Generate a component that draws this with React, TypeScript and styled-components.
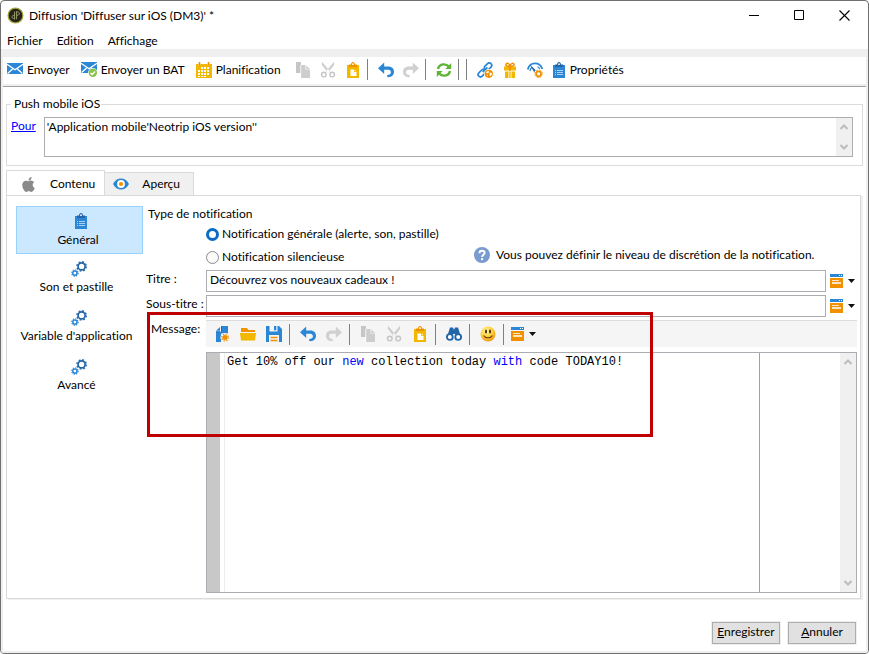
import React from "react";
import styled, { createGlobalStyle } from "styled-components";
import { FaApple } from "react-icons/fa";

const BLUE = "#2b87d6";
const NAVY = "#2366a8";
const ORANGE = "#f29100";
const YELLOW = "#f2b800";
const GREY = "#cdcdcd";

const GlobalStyle = createGlobalStyle`
  *, *::before, *::after { box-sizing: border-box; }
  body { margin: 0; background: #fff; }
  body, button, input, textarea {
    font-family: Lato, "Open Sans", sans-serif;
    font-size: 12px;
    line-height: 16px;
    color: #000;
    font-variant-ligatures: none;
  }
  button, input, textarea { margin: 0; }
  svg { display: block; flex: none; }
`;

/* ---------- window frame ---------- */

const Window = styled.div`
  min-height: 100vh;
  display: flex;
  flex-direction: column;
  border: 1px solid #707070;
  border-radius: 4px;
  background: #fff;
`;

const TitleBar = styled.header`
  display: flex;
  align-items: center;
  height: 30px;
  padding: 0 1px 1px 6px;
`;

const Title = styled.h1`
  flex: 1;
  margin: 0 0 0 5px;
  font-size: 12px;
  font-weight: 400;
`;

const CaptionButton = styled.button`
  width: 45px;
  height: 29px;
  display: grid;
  place-items: center;
  padding: 0;
  border: 0;
  background: none;
`;

const MenuBar = styled.nav`
  display: flex;
  gap: 14px;
  height: 18px;
  padding: 2px 6px 0;
`;

const MenuItem = styled.button`
  padding: 0;
  border: 0;
  background: none;
`;

const Frame = styled.div`
  flex: 1;
  display: flex;
  flex-direction: column;
  padding: 8px 2px 2px;
  background: #efefef;
  border-radius: 0 0 3px 3px;
`;

const Body = styled.main`
  flex: 1;
  display: flex;
  flex-direction: column;
  margin-top: 2px;
  padding: 10px 3px 0;
  border-top: 1px solid #a0a0a0;
  background: #fff;
`;

/* ---------- toolbars ---------- */

const MainToolbar = styled.div`
  display: flex;
  align-items: center;
  height: 27px;
  padding: 0 0 2px 4px;
  background: #fff;
`;

const TextTool = styled.button`
  display: flex;
  align-items: center;
  gap: 4px;
  padding: 0;
  border: 0;
  background: none;
  white-space: nowrap;
`;

const PropertiesTool = styled(TextTool)`
  margin-left: 4px;
`;

const SendTools = styled.div`
  display: flex;
  gap: 11px;
  margin-right: 10px;
`;

const IconTool = styled.button<{ $wide?: boolean }>`
  width: ${(p) => (p.$wide ? 26 : 25)}px;
  height: 25px;
  display: grid;
  place-items: center;
  padding: 0;
  border: 0;
  background: none;
`;

const Separator = styled.span<{ $before: number; $after: number }>`
  width: 1px;
  height: 21px;
  margin: 0 ${(p) => p.$after}px 0 ${(p) => p.$before}px;
  background: #808080;
`;

const EditorToolbar = styled.div`
  display: flex;
  align-items: center;
  height: 27px;
  padding-left: 3px;
  border-top: 1px solid #dcdcdc;
  background: #f5f5f5;
`;

const FieldTool = styled.button`
  display: flex;
  align-items: center;
  gap: 5px;
  padding: 0 2px;
  border: 0;
  background: none;
`;

/* ---------- recipients ---------- */

const Recipients = styled.fieldset`
  display: flex;
  align-items: flex-start;
  gap: 8px;
  min-width: 0;
  margin: 0;
  padding: 6px 9px 8px 4px;
  border: 1px solid #dcdcdc;
`;

const Legend = styled.legend`
  padding: 0 1px 0 3px;
  line-height: 14px;
`;

const Link = styled.a`
  padding-top: 1px;
  color: #0000ff;
  text-decoration: underline;
`;

const ScrollBox = styled.div`
  flex: 1;
  display: flex;
  height: 40px;
  border: 1px solid #abadb3;
`;

const RecipientText = styled.textarea`
  flex: 1;
  min-width: 0;
  padding: 1px 2px;
  border: 0;
  outline: 0;
  resize: none;
  overflow: hidden;
`;

const ScrollTrack = styled.div`
  width: 16px;
  display: flex;
  flex-direction: column;
  justify-content: space-between;
  background: #f0f0f0;
`;

const ScrollButton = styled.button`
  height: 18px;
  display: grid;
  place-items: center;
  padding: 0;
  border: 0;
  background: none;
`;

/* ---------- tabs ---------- */

const TabList = styled.div`
  display: flex;
  align-items: flex-end;
  margin-top: 4px;
`;

const Tab = styled.button<{ $active?: boolean }>`
  display: flex;
  align-items: center;
  height: ${(p) => (p.$active ? 26 : 24)}px;
  margin-bottom: -1px;
  padding: ${(p) => (p.$active ? "2px 9px 0 13px" : "0 13px 0 8px")};
  gap: 13px;
  border: 1px solid #dadada;
  border-left-width: ${(p) => (p.$active ? 1 : 0)}px;
  border-bottom-color: ${(p) => (p.$active ? "#fff" : "#dadada")};
  background: ${(p) => (p.$active ? "#fff" : "#f0f0f0")};
`;

const Panel = styled.section`
  flex: 1;
  display: flex;
  gap: 3px;
  margin-right: 2px;
  padding: 10px 3px 5px 9px;
  border: 1px solid #dadada;
  box-shadow: 2px 1px 0 #efefef;
`;

const SideNav = styled.nav`
  width: 127px;
  flex: none;
  display: flex;
  flex-direction: column;
  gap: 1px;
`;

const SideItem = styled.button<{ $active?: boolean }>`
  height: 48px;
  display: flex;
  flex-direction: column;
  align-items: center;
  padding: ${(p) => (p.$active ? "6px 3px 0 0" : "5px 6px 0 0")};
  border: 1px solid ${(p) => (p.$active ? "#99d1ff" : "transparent")};
  background: ${(p) => (p.$active ? "#cce8ff" : "none")};
  white-space: nowrap;

  svg { margin: 0 0 ${(p) => (p.$active ? 3 : 2)}px 5px; }
`;

/* ---------- form ---------- */

const Form = styled.form`
  flex: 1;
  min-width: 0;
  display: flex;
  flex-direction: column;
  gap: 3px;
`;

const KindGroup = styled.fieldset`
  min-width: 0;
  margin: 0;
  padding: 0 0 2px;
  border: 0;
`;

const KindLegend = styled.legend`
  padding: 0 2px;
`;

const KindRow = styled.div<{ $gap: number }>`
  display: flex;
  align-items: center;
  height: 16px;
  margin-top: ${(p) => p.$gap}px;
  padding-left: 60px;
`;

const RadioLabel = styled.label`
  width: 268px;
  display: flex;
  align-items: center;
  gap: 3px;
  white-space: nowrap;
`;

const Radio = styled.input`
  appearance: none;
  width: 13px;
  height: 13px;
  flex: none;
  border: 1px solid #8a8a8a;
  border-radius: 50%;
  background: #fafafa;

  &:checked {
    border: 3px solid #0a6cc4;
    background: #fff;
  }
`;

const Hint = styled.p`
  display: flex;
  align-items: center;
  gap: 6px;
  margin: 0 0 4px;
  white-space: nowrap;
`;

const Field = styled.div`
  display: flex;
  align-items: center;
`;

const FieldLabel = styled.label`
  width: 60px;
  flex: none;
  padding-bottom: 4px;
  white-space: nowrap;
`;

const TextInput = styled.input`
  flex: 1;
  min-width: 0;
  height: 22px;
  margin-right: 2px;
  padding: 0 3px 3px;
  border: 1px solid #abadb3;
  outline: 0;
  background: #fff;
`;

const MessageSection = styled.div`
  position: relative;
  flex: 1;
  display: flex;
`;

const MessageLabel = styled.span`
  width: 60px;
  flex: none;
  padding: 1px 0 0 5px;
`;

const MessageColumn = styled.div`
  flex: 1;
  min-width: 0;
  display: flex;
  flex-direction: column;
  gap: 5px;
`;

const Editor = styled.div`
  flex: 1;
  min-height: 200px;
  display: flex;
  border: 1px solid #abadb3;
`;

const Gutter = styled.div`
  width: 13px;
  margin-right: 4px;
  background: #c8c8c8;
`;

const EditorText = styled.div`
  flex: 1;
  min-width: 0;
  margin-right: 80px;
  padding: 1px 2px;
  border-left: 1px solid #ececec;
  border-right: 1px solid #a0a0a0;
  outline: 0;
  font-family: "Liberation Mono", "Courier New", monospace;
  white-space: pre-wrap;
`;

const Keyword = styled.span`
  color: #0000ff;
`;

const Highlight = styled.div`
  position: absolute;
  top: -8px;
  left: 1px;
  width: 506px;
  height: 125px;
  border: 3px solid #c00000;
  pointer-events: none;
`;

/* ---------- footer ---------- */

const Footer = styled.footer`
  display: flex;
  justify-content: flex-end;
  gap: 8px;
  padding: 23px 7px 7px;
`;

const PushButton = styled.button`
  width: 68px;
  height: 22px;
  padding: 0 0 2px;
  border: 1px solid #adadad;
  box-shadow: 0 0 0 1px #efefef;
  background: #e1e1e1;

  &::first-letter { text-decoration: underline; }
`;

/* ---------- icons ---------- */

const Svg = ({ w = 16, h = 16, children }: { w?: number; h?: number; children: React.ReactNode }) => (
  <svg width={w} height={h} viewBox={`0 0 ${w} ${h}`} fill="none" aria-hidden="true">
    {children}
  </svg>
);

const AppIcon = () => (
  <Svg w={17} h={17}>
    <circle cx="8.5" cy="8.5" r="7.4" fill="#23231c" stroke="#a3a339" strokeWidth="1.2" />
    <path d="M7.6 4.6v8M7.6 8.4c-1.6-.6-2.6.4-2.600 1.600s1.200 1.800 2.600 1.200M9.600 4.200v8M9.600 5c1.600-.6 2.700.2 2.700 1.500s-1.100 2.100-2.700 1.500" stroke="#9c9d6c" strokeWidth="1" />
  </Svg>
);

const MailShape = () => (
  <>
    <path fill={BLUE} d="M0 0h16v11H0z" />
    <path stroke="#fff" strokeWidth="1.3" d="M0 1.2l8 5.6 8-5.6M.6 10.4L5.6 6M15.4 10.4l-5-4.4" />
  </>
);

const MailIcon = () => (
  <Svg h={14}>
    <MailShape />
  </Svg>
);

const MailCheckIcon = () => (
  <Svg>
    <MailShape />
    <circle cx="11.8" cy="10.8" r="4.8" fill="#fff" />
    <circle cx="11.8" cy="10.8" r="4.2" fill="#8bc34a" />
    <path stroke="#fff" strokeWidth="1.4" d="M9.6 10.9l1.6 1.6 2.9-3.1" />
  </Svg>
);

const CalendarIcon = () => (
  <Svg>
    <path fill={YELLOW} d="M0 2h16v14H0z" />
    <path stroke="#fff" strokeWidth="2" d="M3.5 0v3M12.5 0v3" />
    <path stroke={ORANGE} strokeWidth="1.6" d="M3.5 0v3.6M12.5 0v3.6" />
    <path
      fill="#fff"
      d="M5 5h2v2H5zM8 5h2v2H8zM11 5h2v2h-2zM2 8h2v2H2zM5 8h2v2H5zM8 8h2v2H8zM11 8h2v2h-2zM2 11h2v2H2zM5 11h2v2H5zM8 11h2v2H8zM11 11h2v2h-2z"
    />
    <path fill="#fff" d="M2 14h2v1H2zM5 14h2v1H5zM8 14h2v1H8z" />
  </Svg>
);

const CopyIcon = () => (
  <Svg>
    <path fill="#c6c6c6" d="M1 0h5v11H1z" />
    <path fill={GREY} d="M6 3h4.5v4.5H15V16H6z" />
    <path fill={GREY} d="M11.3 3.4L15 7h-3.7z" />
    <path stroke="#fff" strokeWidth=".8" d="M5.7 2.8V16" />
  </Svg>
);

const CutIcon = () => (
  <Svg>
    <path fill={GREY} d="M2.2 0L9.9 9.2l-2 1.6L1.7 2.6zM13.8 0L6.1 9.2l2 1.6 6.2-8.2z" />
    <circle cx="3.8" cy="12.6" r="2.3" stroke="#c4c4c4" strokeWidth="1.4" />
    <circle cx="12.2" cy="12.6" r="2.3" stroke="#c4c4c4" strokeWidth="1.4" />
  </Svg>
);

const PasteIcon = () => (
  <Svg>
    <path fill={YELLOW} d="M2 3h12v13H2z" />
    <path fill={ORANGE} d="M4 2.4h2C6 .9 6.9 0 8 0s2 .9 2 2.4h2V5H4z" />
    <circle cx="8" cy="2.2" r=".9" fill="#fff" />
    <path fill="#fff" d="M5.5 7.5H9V10h2.5v4h-6z" />
    <path fill="#fff" d="M9.7 7.5l1.8 1.8H9.7z" />
  </Svg>
);

const ArrowShape = () => (
  <>
    <path d="M0 6.2L6.2.5v11.4z" />
    <path d="M5.5 4.6h5C14 4.6 16 7 16 9.800c0 3.200-2.300 5.400-5.500 5.400-1 0-1.500-.5-1.500-1.200s.6-1.200 1.500-1.300c1.500-.1 2.400-1.200 2.400-2.500 0-1.400-1-2.400-2.600-2.400H5.500z" />
  </>
);

const UndoIcon = () => (
  <Svg>
    <g fill={BLUE}>
      <ArrowShape />
    </g>
  </Svg>
);

const RedoIcon = () => (
  <Svg>
    <g fill="#d0d0d0" transform="translate(16 0) scale(-1 1)">
      <ArrowShape />
    </g>
  </Svg>
);

const RefreshIcon = () => (
  <Svg>
    <g fill="none" stroke="#5fb336" strokeWidth="2.4">
      <path d="M2 7C2.600 4.200 5 2.400 8 2.400c2 0 3.600.8 4.700 2.200" />
      <path d="M14 9c-.6 2.800-3 4.600-6 4.600-2 0-3.600-.8-4.700-2.200" />
    </g>
    <path fill="#5fb336" d="M15.2 1v6H9.400zM.8 15V9h5.800z" />
  </Svg>
);

const LinkGlobeIcon = () => (
  <Svg>
    <g stroke={BLUE} strokeWidth="1.7" fill="none">
      <rect x="6.8" y="2.2" width="8.4" height="4.8" rx="2.4" transform="rotate(-45 11 4.6)" />
      <rect x=".6" y="8.8" width="8.4" height="4.8" rx="2.4" transform="rotate(-45 4.8 11.2)" />
      <path d="M5.6 10.2l4.8-4.8" />
    </g>
    <circle cx="11.8" cy="11.8" r="4.7" fill="#fff" />
    <circle cx="11.8" cy="11.8" r="4.1" fill={ORANGE} />
    <path fill="#fff" d="M9.2 10l2-1.300.9 1.200-1.200 1.300-1.400-.1zM12.700 10.600l2 .3.200 1.700-1.600 1.600-.7-1.500zM9.600 12.600l1.400.6-.3 1.300z" />
  </Svg>
);

const GiftIcon = () => (
  <Svg>
    <path fill={YELLOW} d="M2 4.5h12v4H2zM3 9.5h10V16H3z" />
    <path fill={ORANGE} d="M7 4.5h2v4H7z" />
    <path fill="#fff" d="M6.5 9.5h.8V16h-.8zM8.7 9.5h.8V16h-.8z" />
    <path stroke={ORANGE} strokeWidth="1.5" d="M8 4.300C5 4.600 3.600 3.600 4 2.200 4.600.6 7.400.8 8 4.300c.6-3.500 3.400-3.700 4-2.100.4 1.400-1 2.400-4 2.100z" />
  </Svg>
);

const GaugeIcon = () => (
  <Svg>
    <g stroke={BLUE}>
      <path strokeWidth="1.8" d="M.7 7.500C1.800 3.800 4.600 1.400 8 1.400s6.200 2.200 7.300 5.600" />
      <path strokeWidth="1.2" d="M2.800 9c.4-1.800 1.300-3.200 2.600-4M10.500 4.800c1 .5 1.800 1.200 2.300 2.200" />
    </g>
    <path fill={NAVY} d="M2.600 2.600l6.800 6.200-1.900 2z" />
    <circle cx="11.6" cy="11.8" r="4.5" fill="#fff" />
    <circle cx="11.6" cy="11.8" r="3.7" stroke={ORANGE} strokeWidth="1" strokeDasharray="1.6 1.3" />
    <circle cx="11.6" cy="11.8" r="2.5" stroke={ORANGE} strokeWidth="1.7" />
  </Svg>
);

const ClipboardIcon = () => (
  <Svg w={14}>
    <path fill={BLUE} d="M1 3h12v13H1z" />
    <path fill={NAVY} d="M3 2.4h2C5 .9 5.9 0 7 0s2 .9 2 2.4h2V5H3z" />
    <circle cx="7" cy="2.2" r=".9" fill="#fff" />
    <path stroke="#a9d0f2" d="M5 8.5h6M5 10.5h6M5 12.5h6M3 8.5h1M3 10.5h1M3 12.5h1" />
  </Svg>
);

const EyeIcon = () => (
  <Svg h={12}>
    <path fill={BLUE} d="M0 6C2 2.2 4.8.5 8 .5S14 2.200 16 6c-2 3.800-4.800 5.500-8 5.500S2 9.800 0 6z" />
    <circle cx="8" cy="6" r="3.9" fill="#fff" />
    <circle cx="8" cy="6" r="2.1" fill={ORANGE} />
  </Svg>
);

const GearsIcon = () => (
  <Svg>
    <g stroke={NAVY}>
      <circle cx="10.6" cy="5.4" r="3.5" strokeWidth="1.7" />
      <circle cx="10.6" cy="5.4" r="4.7" strokeWidth="1.4" strokeDasharray="1.85 1.85" />
    </g>
    <g stroke={BLUE}>
      <circle cx="3.9" cy="12.1" r="2.1" strokeWidth="1.5" />
      <circle cx="3.9" cy="12.1" r="3.2" strokeWidth="1.2" strokeDasharray="1.25 1.25" />
    </g>
  </Svg>
);

const HelpIcon = () => (
  <Svg>
    <circle cx="8" cy="8" r="8" fill="#7a9bd0" />
    <path stroke="#fff" strokeWidth="1.9" d="M5.400 6.200c0-1.600 1.100-2.500 2.600-2.500s2.600.9 2.600 2.200c0 1.800-2.500 1.800-2.500 4" />
    <circle cx="8.1" cy="12.1" r="1.2" fill="#fff" />
  </Svg>
);

const FormIcon = () => (
  <Svg w={13} h={14}>
    <path fill={BLUE} d="M0 0h13v3H0z" />
    <path fill={ORANGE} d="M0 4h13v10H0z" />
    <path fill="#fff" d="M9 1h1v1H9zM11 1h1v1h-1z" />
    <path fill="#fde6c4" d="M2 6h7v1H2zM2 8h9v2H2z" />
  </Svg>
);

const CaretIcon = () => (
  <Svg w={7} h={4}>
    <path fill="#111" d="M0 0h7L3.5 4z" />
  </Svg>
);

const NewIcon = () => (
  <Svg>
    <path fill={BLUE} d="M7 0h7v7.5H7V16H2V6h5z" />
    <path fill={BLUE} d="M2 4.800L6 1v3.800z" />
    <path stroke={NAVY} d="M2 5.800h4.500M7.500 0v5" />
    <circle cx="11" cy="11.6" r="4.6" fill="#f5f5f5" />
    <circle cx="11" cy="11.6" r="2.5" fill={ORANGE} />
    <circle cx="11" cy="11.6" r="3.3" stroke={ORANGE} strokeWidth="1.4" strokeDasharray="1.3 1.3" />
  </Svg>
);

const FolderIcon = () => (
  <Svg h={14}>
    <path fill={ORANGE} d="M1 1h6l1.500 2H15v2H1z" />
    <path fill={YELLOW} d="M0 6h16l-1 7.500H1z" />
  </Svg>
);

const SaveIcon = () => (
  <Svg>
    <path fill={BLUE} d="M0 0h13l3 3v13H0z" />
    <path fill="#f5f5f5" d="M3.5 0h8v5.500h-8z" />
    <path fill={BLUE} d="M8 0h2.300v4.300H8z" />
    <path fill="#f5f5f5" d="M3 9h10v7H3z" />
    <path stroke={ORANGE} strokeWidth="1.3" d="M4.500 11.500h7M4.500 14.500h7" />
  </Svg>
);

const BinocularsIcon = () => (
  <Svg>
    <path fill={NAVY} d="M4 1.500h3l.8 2h.4l.8-2h3l2.500 8-4 1.500-1.500-3H7l-1.500 3-4-1.500z" />
    <circle cx="3.8" cy="11" r="2.9" fill="#fff" stroke={NAVY} strokeWidth="1.9" />
    <circle cx="12.2" cy="11" r="2.9" fill="#fff" stroke={NAVY} strokeWidth="1.9" />
  </Svg>
);

const SmileyIcon = () => (
  <Svg>
    <defs>
      <radialGradient id="face" cx="40%" cy="30%" r="70%">
        <stop offset="0" stopColor="#fff3a0" />
        <stop offset=".55" stopColor="#fdd23a" />
        <stop offset="1" stopColor="#f09a1c" />
      </radialGradient>
    </defs>
    <circle cx="8" cy="8" r="7.5" fill="url(#face)" />
    <ellipse cx="6" cy="5.6" rx="1" ry="2" fill="#4a2d10" />
    <ellipse cx="10" cy="5.6" rx="1" ry="2" fill="#4a2d10" />
    <path stroke="#6b3c0c" strokeWidth="1.100" d="M3.600 9.400c1.800 3.200 7 3.200 8.800 0" />
  </Svg>
);

const Chevron = ({ down }: { down?: boolean }) => (
  <Svg w={8} h={6}>
    <path stroke="#bdbdbd" strokeWidth="2" d={down ? "M.5 1L4 4.5 7.5 1" : "M.5 5L4 1.5 7.5 5"} />
  </Svg>
);

const Scrollbar = () => (
  <ScrollTrack>
    <ScrollButton type="button" aria-label="Défiler vers le haut">
      <Chevron />
    </ScrollButton>
    <ScrollButton type="button" aria-label="Défiler vers le bas">
      <Chevron down />
    </ScrollButton>
  </ScrollTrack>
);

const InsertField = ({ label }: { label: string }) => (
  <FieldTool type="button" aria-label={label}>
    <FormIcon />
    <CaretIcon />
  </FieldTool>
);

type Tool = [label: string, icon: React.ReactNode];

const mainGroups: Tool[][] = [
  [["Copier", <CopyIcon />], ["Couper", <CutIcon />], ["Coller", <PasteIcon />]],
  [["Annuler la saisie", <UndoIcon />], ["Rétablir", <RedoIcon />]],
  [["Actualiser", <RefreshIcon />]],
  [],
  [["Liens", <LinkGlobeIcon />], ["Offres", <GiftIcon />], ["Suivi", <GaugeIcon />]],
];

const editorGroups: Tool[][] = [
  [["Nouveau", <NewIcon />], ["Ouvrir", <FolderIcon />], ["Sauvegarder", <SaveIcon />]],
  [["Annuler la saisie", <UndoIcon />], ["Rétablir", <RedoIcon />]],
  [["Copier", <CopyIcon />], ["Couper", <CutIcon />], ["Coller", <PasteIcon />]],
  [["Rechercher", <BinocularsIcon />]],
  [["Emoji", <SmileyIcon />]],
];

const sideItems = ["Général", "Son et pastille", "Variable d'application", "Avancé"];

export default function App() {
  return (
    <Window>
      <GlobalStyle />
      <TitleBar>
        <AppIcon />
        <Title>Diffusion 'Diffuser sur iOS (DM3)' *</Title>
        <CaptionButton aria-label="Réduire">
          <Svg w={11} h={11}>
            <path stroke="#000" d="M0 5.5h10" />
          </Svg>
        </CaptionButton>
        <CaptionButton aria-label="Agrandir">
          <Svg w={11} h={11}>
            <path stroke="#000" d="M.5.5h9v9h-9z" />
          </Svg>
        </CaptionButton>
        <CaptionButton aria-label="Fermer">
          <Svg w={11} h={11}>
            <path stroke="#000" strokeWidth="1.1" d="M.5.5l10 10M10.5.5l-10 10" />
          </Svg>
        </CaptionButton>
      </TitleBar>
      <MenuBar>
        <MenuItem>Fichier</MenuItem>
        <MenuItem>Edition</MenuItem>
        <MenuItem>Affichage</MenuItem>
      </MenuBar>

      <Frame>
        <MainToolbar role="toolbar" aria-label="Diffusion">
          <SendTools>
            <TextTool><MailIcon />Envoyer</TextTool>
            <TextTool><MailCheckIcon />Envoyer un BAT</TextTool>
            <TextTool><CalendarIcon />Planification</TextTool>
          </SendTools>
          {mainGroups.map((group, i) => (
            <React.Fragment key={i}>
              {i > 0 && <Separator $before={1} $after={6} />}
              {group.map(([label, icon]) => (
                <IconTool key={label} aria-label={label}>{icon}</IconTool>
              ))}
            </React.Fragment>
          ))}
          <PropertiesTool><ClipboardIcon />Propriétés</PropertiesTool>
        </MainToolbar>

        <Body>
          <Recipients>
            <Legend>Push mobile iOS</Legend>
            <Link href="#pour" id="pour">Pour</Link>
            <ScrollBox>
              <RecipientText aria-labelledby="pour" defaultValue={"'Application mobile'Neotrip iOS version''"} />
              <Scrollbar />
            </ScrollBox>
          </Recipients>

          <TabList role="tablist">
            <Tab role="tab" aria-selected="true" $active>
              <FaApple size={17} color="#8a8a8a" />
              Contenu
            </Tab>
            <Tab role="tab" aria-selected="false">
              <EyeIcon />
              Aperçu
            </Tab>
          </TabList>

          <Panel role="tabpanel">
            <SideNav>
              {sideItems.map((name, i) => (
                <SideItem key={name} $active={i === 0}>
                  {i === 0 ? <ClipboardIcon /> : <GearsIcon />}
                  {name}
                </SideItem>
              ))}
            </SideNav>

            <Form>
              <KindGroup>
                <KindLegend>Type de notification</KindLegend>
                <KindRow $gap={4}>
                  <RadioLabel>
                    <Radio type="radio" name="kind" defaultChecked />
                    Notification générale (alerte, son, pastille)
                  </RadioLabel>
                </KindRow>
                <KindRow $gap={7}>
                  <RadioLabel>
                    <Radio type="radio" name="kind" />
                    Notification silencieuse
                  </RadioLabel>
                  <Hint>
                    <HelpIcon />
                    Vous pouvez définir le niveau de discrétion de la notification.
                  </Hint>
                </KindRow>
              </KindGroup>

              <Field>
                <FieldLabel htmlFor="titre">Titre :</FieldLabel>
                <TextInput id="titre" defaultValue="Découvrez vos nouveaux cadeaux !" />
                <InsertField label="Insérer un champ dans le titre" />
              </Field>
              <Field>
                <FieldLabel htmlFor="sous-titre">Sous-titre :</FieldLabel>
                <TextInput id="sous-titre" />
                <InsertField label="Insérer un champ dans le sous-titre" />
              </Field>

              <MessageSection>
                <MessageLabel id="message">Message:</MessageLabel>
                <MessageColumn>
                  <EditorToolbar role="toolbar" aria-label="Message">
                    {editorGroups.map((group, i) => (
                      <React.Fragment key={i}>
                        {group.map(([label, icon]) => (
                          <IconTool key={label} type="button" aria-label={label} $wide>{icon}</IconTool>
                        ))}
                        <Separator $before={2} $after={5} />
                      </React.Fragment>
                    ))}
                    <InsertField label="Insérer un champ dans le message" />
                  </EditorToolbar>
                  <Editor>
                    <Gutter />
                    <EditorText
                      role="textbox"
                      aria-multiline="true"
                      aria-labelledby="message"
                      contentEditable
                      suppressContentEditableWarning
                      spellCheck={false}
                    >
                      Get 10% off our <Keyword>new</Keyword> collection today <Keyword>with</Keyword> code TODAY10!
                    </EditorText>
                    <Scrollbar />
                  </Editor>
                </MessageColumn>
                <Highlight />
              </MessageSection>
            </Form>
          </Panel>

          <Footer>
            <PushButton>Enregistrer</PushButton>
            <PushButton>Annuler</PushButton>
          </Footer>
        </Body>
      </Frame>
    </Window>
  );
}
